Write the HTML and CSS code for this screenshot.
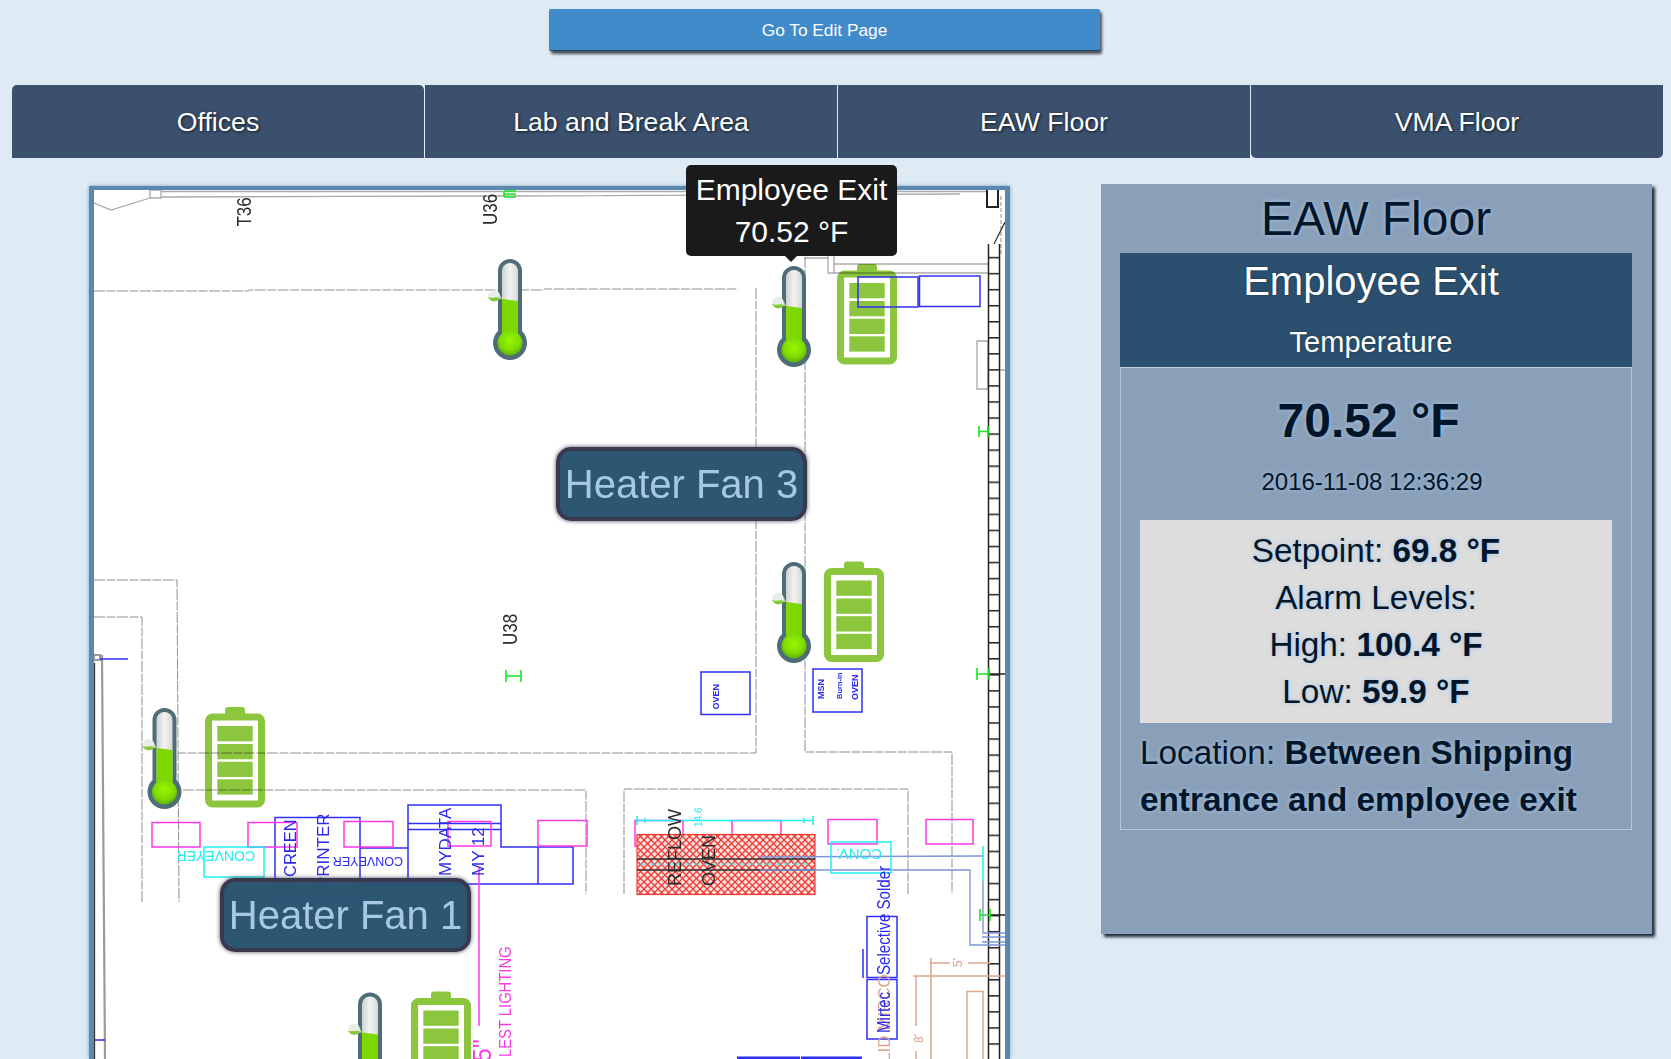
FILE: index.html
```html
<!DOCTYPE html>
<html lang="en">
<head>
<meta charset="utf-8">
<title>EAW Floor</title>
<link rel="stylesheet" href="styles.css">
</head>
<body>
<div class="page">
  <a class="edit-btn">Go To Edit Page</a>
  <nav class="tabs">
    <a class="tab tab-first">Offices</a>
    <a class="tab">Lab and Break Area</a>
    <a class="tab">EAW Floor</a>
    <a class="tab tab-last">VMA Floor</a>
  </nav>
  <main class="main">
    <section class="map">
      <svg class="plan" width="911" height="869" viewBox="94 190 911 869" xmlns="http://www.w3.org/2000/svg">
        <defs>
          <linearGradient id="glass" x1="0" y1="0" x2="1" y2="0">
            <stop offset="0" stop-color="#cfd2d2"/><stop offset=".5" stop-color="#f2f2f2"/><stop offset="1" stop-color="#d6d8d8"/>
          </linearGradient>
          <radialGradient id="bulb" cx=".5" cy=".4" r=".6">
            <stop offset="0" stop-color="#97f800"/><stop offset=".65" stop-color="#7fdc00"/><stop offset="1" stop-color="#5fae08"/>
          </radialGradient>
          <pattern id="rungs" width="11" height="16.05" patternUnits="userSpaceOnUse" y="0">
            <rect width="11" height="1.5" fill="#222"/>
          </pattern>
          <pattern id="hatch" width="7" height="7" patternUnits="userSpaceOnUse">
            <rect width="7" height="7" fill="#fde3e0"/>
            <path d="M0 0L7 7M7 0L0 7" stroke="#f23a35" stroke-width="1.3"/>
          </pattern>
          <g id="thermo">
            <rect x="-12" y="0" width="24" height="82" rx="12" fill="#4f6d78"/>
            <circle cx="0" cy="84" r="17" fill="#4f6d78"/>
            <rect x="-8" y="4" width="16" height="76" rx="8" fill="url(#glass)"/>
            <path d="M-8 40L8 42V84H-8Z" fill="#7ed800"/>
            <circle cx="0" cy="84" r="12.5" fill="url(#bulb)"/>
            <path d="M-10 36L-8 40L-12 40Z" fill="#b9cfa0"/>
            <circle cx="-16" cy="37" r="6" fill="#e9efe6"/>
            <path d="M-22 38C-18 40-14 37-10 39C-12 43-19 44-22 38Z" fill="#86c83a"/>
          </g>
          <g id="battery">
            <rect x="20" y="0" width="20" height="10" rx="3" fill="#8cc63f"/>
            <rect x="3.5" y="10" width="53" height="87" rx="4" fill="none" stroke="#8cc63f" stroke-width="7"/>
            <rect x="12.3" y="19" width="35.4" height="15.3" fill="#8cc63f"/>
            <rect x="12.3" y="37" width="35.4" height="15.3" fill="#8cc63f"/>
            <rect x="12.3" y="54.7" width="35.4" height="15.3" fill="#8cc63f"/>
            <rect x="12.3" y="72.3" width="35.4" height="15.3" fill="#8cc63f"/>
          </g>
        </defs>

        <g class="wall">
          <path d="M161 191.5L988 191.5M161 197L500 196L960 194M94 203L111 210L150 198M150 190H161V198H150Z"/>
          <path d="M828 249H834V273H828ZM804 258H828M834 264H988M834 273H988M977 341H988V389H977ZM999 370H1005"/>
          <path class="wall-heavy" d="M102 655L105 1059M94 655H100V660H94Z"/>
          <path class="wall-dash" d="M1001 196V256"/>
        </g>

        <g class="dash">
          <path d="M94 291H248L250 290H543L545 289H738"/>
          <path d="M756 288V753H178"/>
          <path d="M805 257V752H952V893"/>
          <path d="M183 790H586V894"/>
          <path d="M624 894V789H908V894"/>
          <path d="M94 580H177L179 902"/>
          <path d="M94 617H142V902"/>
        </g>

        <g class="ink">
          <path d="M94.5 663V1059"/>
          <path d="M994 244L1005 222"/>
          <path class="ink-heavy" d="M987 190V207H998V190"/>
        </g>
        <rect x="988.5" y="244" width="11" height="815" fill="url(#rungs)"/>
        <path class="ladder" d="M988.5 244V1059M999.5 244V1059M989 674H1005M990 915H1005"/>

        <g class="green">
          <path d="M504 191V197M504 191H516M504 194H516M504 197H516"/>
          <path d="M979 431.5H988M979 426V437M988 426V437"/>
          <path d="M977 674H989M977 668V680M989 668V680"/>
          <path d="M980 915H990M980 909V921M990 909V921"/>
          <path d="M506 676H521M506 670V682M521 670V682"/>
        </g>

        <use class="battery" href="#battery" x="837" y="264"/>
        <use class="battery" href="#battery" x="824" y="561.5"/>
        <use class="battery" href="#battery" x="205" y="707"/>
        <use class="battery" href="#battery" x="411" y="991.5"/>

        <g class="blue">
          <rect x="858" y="277" width="60" height="30"/>
          <rect x="919.5" y="276" width="60.5" height="30.5"/>
          <rect x="701" y="672" width="49" height="42.5"/>
          <rect x="813" y="669" width="49" height="43"/>
          <rect x="275" y="817.5" width="85" height="85"/>
          <path d="M408 882V805H501V847H573V884H360M408 823.5H501M408 829.5H501M360 848H408M538 847V884"/>
          <rect x="867" y="916.5" width="30" height="61"/>
          <rect x="867" y="979.5" width="30" height="59.5"/>
          <path d="M863 949V978M95 1040H105M100 659H128"/>
          <path class="blue-thick" d="M737 1058H800M801 1058H862"/>
        </g>

        <g class="pink">
          <rect x="152" y="822.5" width="48" height="24.5"/>
          <rect x="248" y="822.5" width="49" height="24.5"/>
          <rect x="344" y="821.5" width="49" height="25.5"/>
          <rect x="448" y="821.5" width="43" height="24.5"/>
          <rect x="538" y="820.5" width="49" height="25.5"/>
          <rect x="635" y="820.5" width="48" height="25.5"/>
          <rect x="732" y="820.5" width="49" height="23.5"/>
          <rect x="828" y="819.5" width="49" height="24.5"/>
          <rect x="926" y="819.5" width="47" height="24.5"/>
          <path d="M479 867V1026"/>
        </g>

        <rect class="hatch" x="637" y="834.5" width="178" height="60" fill="url(#hatch)"/>
        <path class="ink" d="M637 859H815M637 870H815"/>
        <path class="pipe" d="M760 857L983 856M760 870H970V945H1005M983 881V933H1005M982 942H1005M982 937H1005"/>

        <g class="cyan">
          <rect x="204" y="847" width="60" height="30"/>
          <rect x="831" y="842" width="60" height="31"/>
          <path d="M637 820.5H813M637 816V825M813 816V825M645 818V823M804 818V823"/>
          <path class="cyan-dash" d="M640 864H810"/>
          <path d="M983 846V881"/>
        </g>

        <g class="orange">
          <path d="M931 965V1059M913 976H1005M916 976V1026M916 1051V1059M931 963H950M968 963H990M931 958V968"/>
          <rect x="967" y="991.5" width="16" height="80"/>
        </g>

        <text class="t t-black" transform="translate(251 226.5) rotate(-90) scale(1 1.15)">T36</text>
        <text class="t t-black" transform="translate(497 225) rotate(-90) scale(1 1.15)">U36</text>
        <text class="t t-black" transform="translate(517 645) rotate(-90) scale(1 1.15)">U38</text>
        <text class="t t-cyan t-conv" transform="translate(255 851) rotate(180)">CONVEYER</text>
        <text class="t t-blue t-conv2" transform="translate(403 857) rotate(180)">CONVEYER</text>
        <text class="t t-cyan t-conv3" transform="translate(882 849) rotate(180)">CONV.</text>
        <text class="t t-blue t-screen" transform="translate(296 888) rotate(-90)">SCREEN</text>
        <text class="t t-blue" transform="translate(329 888) rotate(-90)">PRINTER</text>
        <text class="t t-blue" transform="translate(451 876) rotate(-90)">MYDATA</text>
        <text class="t t-blue" transform="translate(484 876) rotate(-90)">MY 12</text>
        <text class="t t-magenta" transform="translate(510.5 1057) rotate(-90) scale(.87 1)">LEST LIGHTING</text>
        <text class="t t-magenta t-big" transform="translate(491 1062) rotate(-90)">5"</text>
        <text class="t t-black t-ref" transform="translate(680.5 886) rotate(-90)">REFLOW</text>
        <text class="t t-black t-ref" transform="translate(715 886) rotate(-90)">OVEN</text>
        <text class="t t-cyan t-tiny" transform="translate(702 827) rotate(-90)">14.6</text>
        <text class="t t-blue t-mini" transform="translate(719 709.5) rotate(-90)">OVEN</text>
        <text class="t t-blue t-mini" transform="translate(824 699) rotate(-90)">MSN</text>
        <text class="t t-blue t-burn" transform="translate(842 699) rotate(-90)">Burn-in</text>
        <text class="t t-blue t-mini" transform="translate(858 700) rotate(-90)">OVEN</text>
        <text class="t t-orange" transform="translate(890 1062) rotate(-90)">LID MIRCO</text>
        <text class="t t-blue t-lg" transform="translate(890 975) rotate(-90) scale(.84 1)">Selective Solder</text>
        <text class="t t-blue t-lg" transform="translate(890 1033) rotate(-90) scale(.84 1)">Mirtec</text>
        <text class="t t-orange t-dim" transform="translate(961.5 967) rotate(-90)">5'</text>
        <text class="t t-orange t-dim" transform="translate(923 1043) rotate(-90)">8'</text>

        <g class="thermos">
          <use href="#thermo" x="510" y="259"/>
          <use href="#thermo" x="794" y="266"/>
          <use href="#thermo" x="794" y="562"/>
          <use href="#thermo" x="164.5" y="708"/>
          <use href="#thermo" x="370" y="992.5"/>
        </g>
      </svg>
      <div class="tooltip">Employee Exit<br>70.52 °F</div>
      <div class="zone zone-3">Heater Fan 3</div>
      <div class="zone zone-1">Heater Fan 1</div>
    </section>

    <aside class="panel">
      <h2 class="panel-title">EAW Floor</h2>
      <header class="panel-head">
        <div class="head-name">Employee Exit</div>
        <div class="head-type">Temperature</div>
      </header>
      <div class="panel-body">
        <div class="reading">70.52 °F</div>
        <div class="stamp">2016-11-08 12:36:29</div>
        <div class="levels">
          <div>Setpoint: <b>69.8 °F</b></div>
          <div>Alarm Levels:</div>
          <div>High: <b>100.4 °F</b></div>
          <div>Low: <b>59.9 °F</b></div>
        </div>
        <div class="location">Location: <b>Between Shipping entrance and employee exit</b></div>
      </div>
    </aside>
  </main>
</div>
</body>
</html>
```

FILE: styles.css
```css
* { box-sizing: border-box; }
html, body { margin: 0; height: 100%; }
body {
  background: #deebf4;
  font-family: "Liberation Sans", Arial, sans-serif;
  overflow: hidden;
}
.page {
  height: 1059px;
  overflow: hidden;
  padding: 9px 8px 0 12px;
}
.edit-btn {
  display: block;
  width: 551px;
  height: 42px;
  margin-left: 537px;
  background: #428bca;
  border-bottom: 1px solid #1d4666;
  border-radius: 2px;
  box-shadow: 2px 3px 3px #4a4f55;
  color: #fff;
  font-size: 17.3px;
  line-height: 42px;
  text-align: center;
}
.tabs {
  display: flex;
  gap: 1px;
  margin-top: 34px;
}
.tab {
  flex: 1;
  height: 73px;
  background: #3b506d;
  color: #fff;
  font-size: 26.67px;
  line-height: 75px;
  text-align: center;
  text-shadow: 1px 1px 3px #0d1a2a;
}
.tab-first { border-radius: 5px 5px 0 0; }
.tab-last { border-radius: 0 0 5px 5px; }
.main {
  display: flex;
  align-items: flex-start;
  margin-top: 26px;
}
.map {
  position: relative;
  width: 921px;
  height: 873px;
  flex: none;
  margin: 2px 0 0 77px;
  background: #fff;
  border: 5px solid #5b88ae;
  border-top-width: 4px;
  border-bottom: 0;
  box-shadow: 0 0 4px #7ea2c2;
}
.plan {
  display: block;
  filter: blur(0.35px);
}
.thermos { filter: blur(0.6px); }
.wall, .dash, .ink, .ladder, .blue, .pink, .cyan, .green, .orange, .pipe { fill: none; }
.wall { stroke: #a9a9a9; stroke-width: 1.3; }
.wall-heavy { stroke: #9a9a9a; stroke-width: 2.2; }
.wall-dash { stroke: #b5b5b5; stroke-width: 1.5; stroke-dasharray: 4 2; }
.dash { stroke: #8f8f8f; stroke-width: 1; stroke-dasharray: 11 1.5 9 1.5; }
.ink { stroke: #333; stroke-width: 1.3; }
.ink-heavy { stroke-width: 2; stroke: #222; }
.ladder { stroke: #222; stroke-width: 1.5; }
.blue { stroke: #2f2ff5; stroke-width: 1.5; }
.blue-thick { stroke-width: 3; }
.pink { stroke: #ff38e8; stroke-width: 1.5; }
.cyan { stroke: #1ff0f5; stroke-width: 1.5; }
.cyan-dash { stroke-dasharray: 6 3; stroke-width: 1; }
.green { stroke: #16e81e; stroke-width: 1.6; }
.orange { stroke: #dca78f; stroke-width: 1.5; }
.pipe { stroke: #7f95d8; stroke-width: 1.4; }
.hatch { stroke: #f23a35; stroke-width: 1.2; }
.battery { mix-blend-mode: multiply; }
.t { font-family: "Liberation Sans", Arial, sans-serif; font-size: 17px; }
.t-black { fill: #2a2a2a; }
.t-blue { fill: #2b2bf0; }
.t-cyan { fill: #22eef2; }
.t-magenta { fill: #f63ce0; }
.t-orange { fill: #dba58f; }
.t-conv { font-size: 14px; }
.t-conv2 { font-size: 12.5px; }
.t-conv3 { font-size: 15px; }
.t-screen { font-size: 16.5px; }
.t-big { font-size: 25px; }
.t-ref { font-size: 18px; }
.t-tiny { font-size: 10px; }
.t-mini { font-size: 9px; font-weight: bold; }
.t-burn { font-size: 7.5px; font-weight: bold; }
.t-lg { font-size: 18px; }
.t-dim { font-size: 12px; }
.tooltip {
  position: absolute;
  left: 592px;
  top: -25px;
  width: 211px;
  height: 91px;
  padding-top: 4px;
  background: #1a1a1a;
  border-radius: 5px;
  color: #fff;
  font-size: 30px;
  line-height: 42px;
  text-align: center;
}
.tooltip::after {
  content: "";
  position: absolute;
  left: 99px;
  bottom: -6px;
  border-style: solid;
  border-width: 6px 6px 0;
  border-color: #1a1a1a transparent transparent;
}
.zone {
  position: absolute;
  width: 251px;
  height: 74px;
  background: rgba(41, 83, 111, 0.98);
  border: 4px solid #38384e;
  border-radius: 15px;
  box-shadow: 0 0 4px #4c4c62;
  color: #a6c8e6;
  font-size: 40px;
  line-height: 66px;
  text-align: center;
}
.zone-3 { left: 462px; top: 257px; }
.zone-1 { left: 126px; top: 688px; }
.panel {
  width: 551px;
  height: 750px;
  flex: none;
  margin-left: 91px;
  padding: 0 20px 0 19px;
  background: #8a9fb8;
  box-shadow: 3px 3px 3px #1f2a36;
  color: #02162b;
  text-align: center;
  text-shadow: 0 0 5px #a9c6e4;
}
.panel-title {
  margin: 0;
  font-size: 48px;
  font-weight: normal;
  line-height: 69px;
}
.panel-head {
  height: 114px;
  padding-right: 10px;
  background: #2b506f;
  color: #fff;
  text-shadow: 0 0 2px #16293a;
}
.head-name { font-size: 40px; line-height: 57px; }
.head-type { margin-top: 12px; font-size: 29px; line-height: 40px; }
.panel-body {
  height: 463px;
  padding: 0 19px;
  border: 1px solid #b6c7dc;
  border-top-color: #c4d2e2;
}
.reading {
  margin-top: 18px;
  padding-right: 15px;
  font-size: 48px;
  font-weight: bold;
  line-height: 69px;
}
.stamp {
  margin-top: 10px;
  padding-right: 8px;
  font-size: 24px;
  line-height: 34px;
}
.levels {
  margin-top: 21px;
  height: 203px;
  padding-top: 7px;
  background: #dddddd;
  font-size: 33.3px;
  line-height: 47px;
}
.location {
  margin-top: 6px;
  font-size: 33.3px;
  line-height: 47px;
  text-align: left;
}
```
